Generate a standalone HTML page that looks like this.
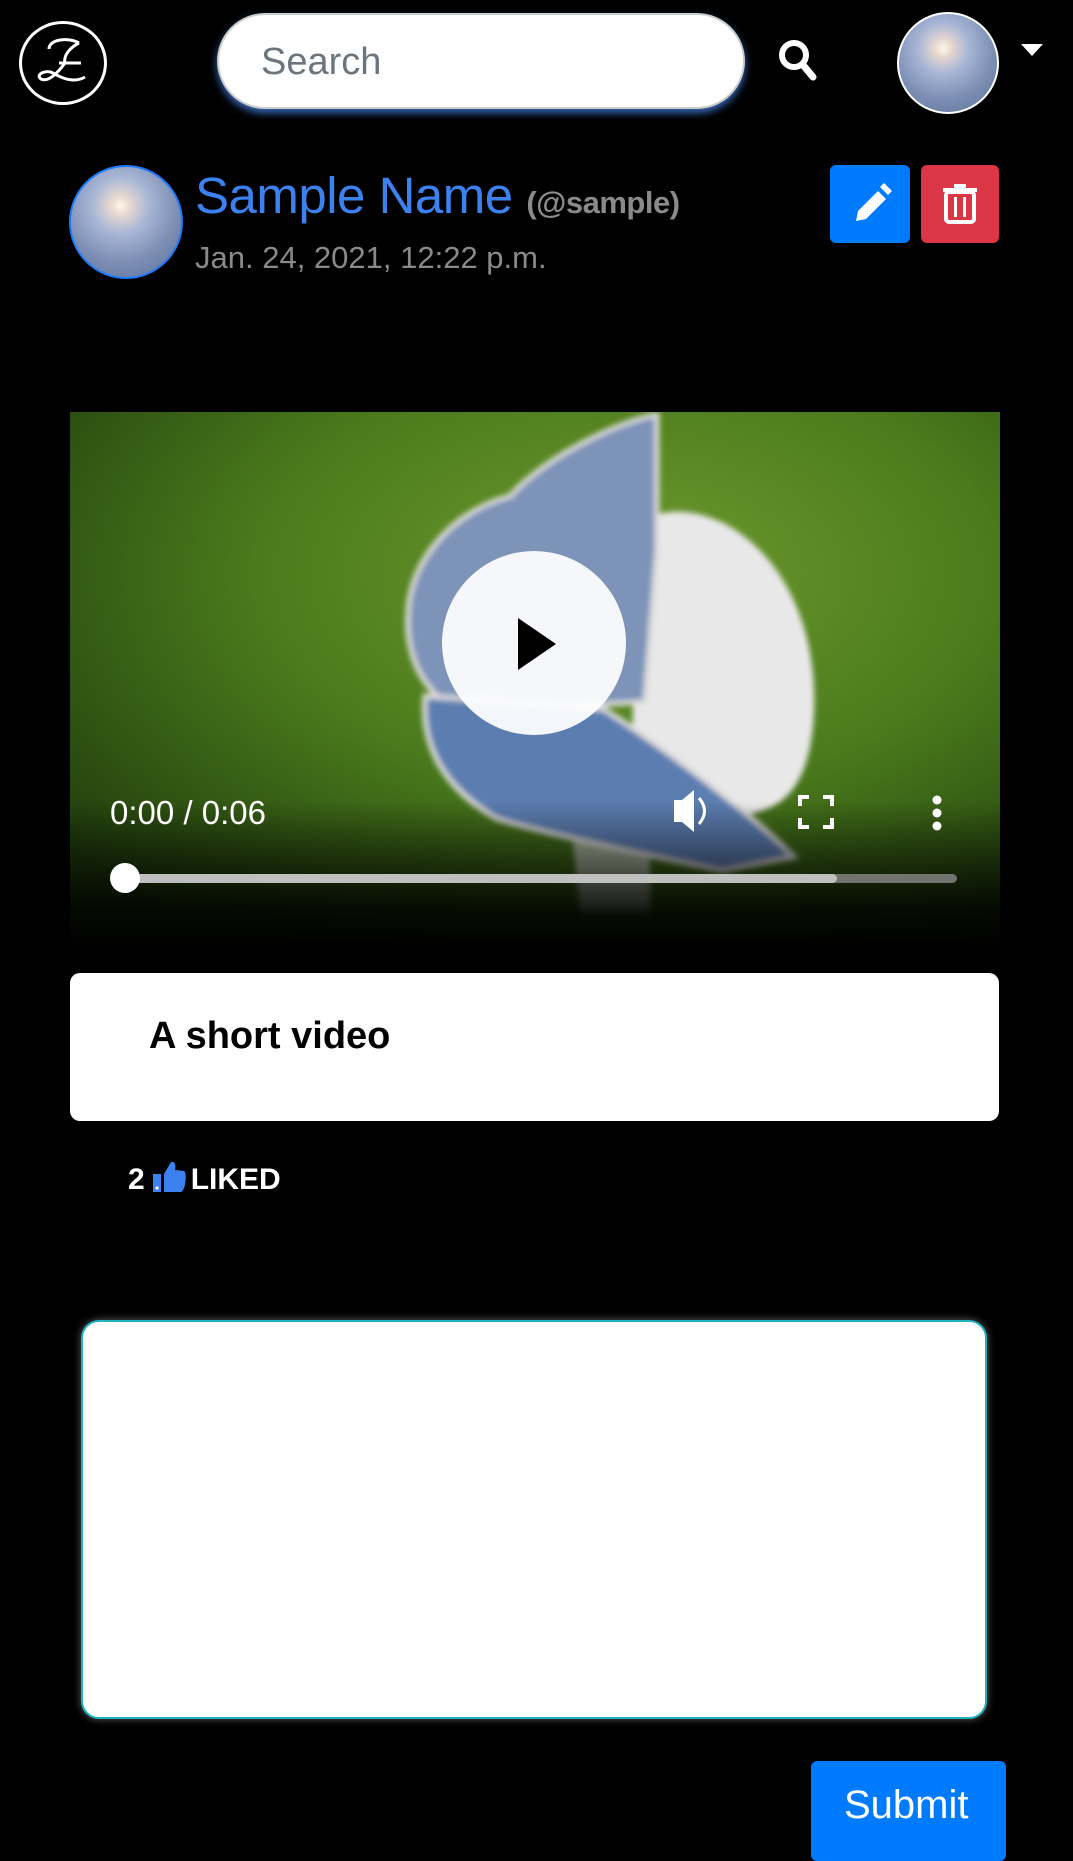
<!DOCTYPE html>
<html><head><meta charset="utf-8"><style>
*{box-sizing:border-box;margin:0;padding:0}
body{width:1073px;height:1850px;background:#000;font-family:"Liberation Sans",sans-serif;position:relative;overflow:hidden}
.abs{position:absolute}
.av{border-radius:50%;background:radial-gradient(circle at 45% 35%,#fff8e8 0,#e8d8d0 10%,#a9b7d6 30%,#7d8fb5 60%,#5b6f96 100%);overflow:hidden}
</style></head><body>
<!-- logo -->
<div class="abs" style="left:19px;top:21px;width:88px;height:84px;border:3px solid #fff;border-radius:50%;"></div>
<svg class="abs" style="left:19px;top:21px" width="88" height="84" viewBox="0 0 88 84"><path d="M30 28 C30 18 50 16 60 22 M60 22 C52 26 44 34 46 42 M40 42 L62 42 M46 42 C40 50 30 62 22 58 C16 54 26 48 34 52 C44 58 56 62 66 56" stroke="#fff" stroke-width="3" fill="none"/></svg>
<!-- search -->
<div class="abs" style="left:217px;top:13px;width:528px;height:96px;background:#fff;border:2px solid #ccc;border-radius:48px;box-shadow:0 4px 8px rgba(70,130,230,.8);font-size:38px;color:#6c757d;padding:28px 0 0 42px;line-height:1">Search</div>
<svg class="abs" style="left:777px;top:38px" width="42" height="44" viewBox="0 0 42 44"><circle cx="17" cy="17" r="12" fill="none" stroke="#fff" stroke-width="6"/><line x1="26" y1="27" x2="36" y2="39" stroke="#fff" stroke-width="7" stroke-linecap="round"/></svg>
<div class="abs av" style="left:897px;top:12px;width:102px;height:102px;border:2px solid #fff"></div>
<div class="abs" style="left:1021px;top:44px;width:0;height:0;border-left:11px solid transparent;border-right:11px solid transparent;border-top:12px solid #fff"></div>
<!-- profile -->
<div class="abs av" style="left:69px;top:165px;width:114px;height:114px;border:2px solid #1e7bff"></div>
<div class="abs" style="left:195px;top:166px;font-size:51px;color:#3b82f0;white-space:nowrap;letter-spacing:-0.5px">Sample Name <span style="font-size:31px;font-weight:bold;color:#8a8a8a;letter-spacing:-0.5px">(@sample)</span></div>
<div class="abs" style="left:195px;top:240px;font-size:31px;color:#8a8a8a">Jan. 24, 2021, 12:22 p.m.</div>
<div class="abs" style="left:830px;top:165px;width:80px;height:78px;background:#007bff;border-radius:6px"><svg width="80" height="78" viewBox="0 0 80 78"><path d="M48 26 L56 34 L36 54 L26 56 L28 46 Z" fill="#fff"/><path d="M50 22 L54 18 L62 26 L58 30 Z" fill="#fff"/></svg></div>
<div class="abs" style="left:921px;top:165px;width:78px;height:78px;background:#dc3545;border-radius:6px"><svg width="78" height="78" viewBox="0 0 78 78"><rect x="25" y="27" width="28" height="30" rx="3" fill="none" stroke="#fff" stroke-width="4"/><rect x="22" y="23" width="34" height="4" fill="#fff"/><rect x="33" y="19" width="12" height="5" fill="#fff"/><rect x="33" y="32" width="3" height="20" fill="#fff"/><rect x="42" y="32" width="3" height="20" fill="#fff"/></svg></div>
<!-- video -->
<svg class="abs" style="left:70px;top:412px" width="930" height="540" viewBox="0 0 930 540">
<defs><radialGradient id="bg" cx="60%" cy="30%" r="80%"><stop offset="0" stop-color="#6f9a2e"/><stop offset=".5" stop-color="#4a7a1c"/><stop offset="1" stop-color="#1e3a0c"/></radialGradient>
<linearGradient id="fade" x1="0" y1="0" x2="0" y2="1"><stop offset=".72" stop-color="#000" stop-opacity="0"/><stop offset=".92" stop-color="#000" stop-opacity=".85"/><stop offset="1" stop-color="#000"/></linearGradient>
<filter id="bl"><feGaussianBlur stdDeviation="3"/></filter></defs>
<rect width="930" height="540" fill="url(#bg)"/>
<g filter="url(#bl)">
<path d="M568 110 C640 70 750 150 744 300 C740 390 700 410 640 400 L600 420 L560 400 Z" fill="#e8e8e8"/>
<path d="M500 400 L580 400 L580 500 L510 500 Z" fill="#d0d0d0" opacity=".7"/>
<path d="M440 84 C480 40 560 5 587 3 L587 138 L575 290 L390 300 C350 280 335 240 338 200 C340 150 380 100 440 84 Z" fill="#7d93b8" stroke="#ddd" stroke-width="5"/>
<path d="M355 284 L534 297 C600 340 680 400 724 445 L652 459 C560 440 470 420 427 407 C380 380 350 340 355 284 Z" fill="#5c7db0" stroke="#ddd" stroke-width="5"/>
</g>
<rect width="930" height="540" fill="url(#fade)"/>
<circle cx="464" cy="231" r="92" fill="#fff" opacity=".93"/>
<path d="M448 206 L486 232 L448 258 Z" fill="#000"/>
<text x="40" y="412" font-family="Liberation Sans" font-size="33" fill="#fff">0:00 / 0:06</text>
<path d="M604 388 L612 388 L624 378 L624 420 L612 410 L604 410 Z" fill="#fff"/><path d="M629 386 Q640 399 629 412" stroke="#fff" stroke-width="3" fill="none"/>
<path d="M730 394 V385 H739 M753 385 H762 V394 M762 406 V415 H753 M739 415 H730 V406" stroke="#fff" stroke-width="4" fill="none"/>
<circle cx="867" cy="388" r="4.5" fill="#fff"/><circle cx="867" cy="401" r="4.5" fill="#fff"/><circle cx="867" cy="414" r="4.5" fill="#fff"/>
<rect x="55" y="462" width="832" height="9" rx="4.5" fill="#888" opacity=".8"/>
<rect x="55" y="462" width="712" height="9" rx="4.5" fill="#ccc" opacity=".85"/>
<circle cx="55" cy="466" r="15" fill="#fff"/>
</svg>
<!-- caption -->
<div class="abs" style="left:70px;top:973px;width:929px;height:148px;background:#fff;border-radius:10px;font-size:38px;font-weight:bold;color:#000;padding:42px 0 0 79px">A short video</div>
<div class="abs" style="left:128px;top:1158px;font-size:30px;font-weight:bold;color:#fff;white-space:nowrap">2<svg width="36" height="36" viewBox="0 0 36 36" style="vertical-align:-5px;margin:0 4px 0 6px"><rect x="2" y="16" width="8" height="18" fill="#3b82f0"/><circle cx="6" cy="30" r="1.6" fill="#fff"/><path d="M13 16 L20 4 C24 3 25 7 24 12 L33 13 C36 14 35 32 30 34 L13 34 Z" fill="#3b82f0"/></svg>LIKED</div>
<!-- textarea -->
<div class="abs" style="left:81px;top:1320px;width:906px;height:399px;background:#fff;border:2px solid #20b2c0;border-radius:18px;box-shadow:0 0 8px rgba(120,120,120,.8)"></div>
<div class="abs" style="left:811px;top:1761px;width:195px;height:100px;background:#007bff;border-radius:6px;color:#fff;font-size:40px;padding:22px 0 0 33px">Submit</div>
</body></html>
